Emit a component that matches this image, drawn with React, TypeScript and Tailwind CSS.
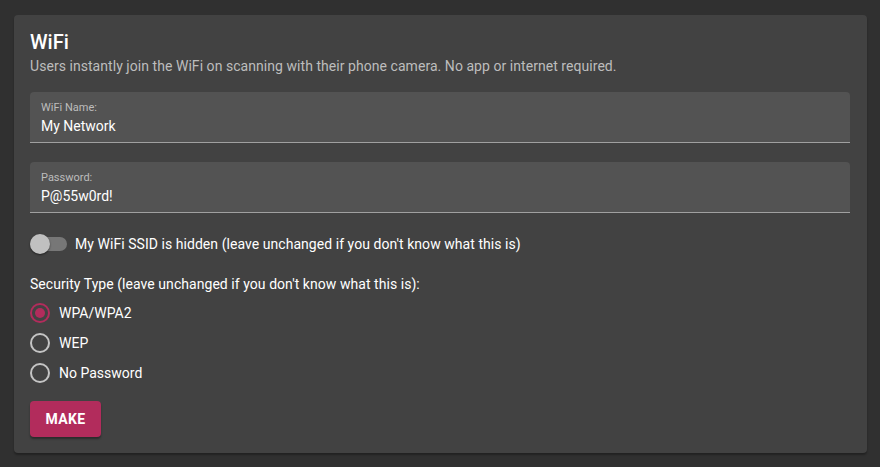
import React from "react";

export default function App() {
  return (
    <div className="w-[880px] h-[467px] bg-[#303030] pt-[15px] pl-[14px] pr-[13px]" style={{ fontFamily: "Roboto, 'Liberation Sans', sans-serif" }}>
      <div className="h-[438px] rounded-[4px] bg-[#424242] px-[16px] pt-[15px] shadow-[0_2px_2px_rgba(0,0,0,0.3)]">
        <h1 className="text-[20px] leading-[24px] font-medium text-white">WiFi</h1>
        <p className="mt-[2px] text-[14px] leading-[20px] tracking-[0.05px] text-[#bdbdbd]">
          Users instantly join the WiFi on scanning with their phone camera. No app or internet required.
        </p>
        <div className="mt-[16px] mr-[1px] h-[51px] rounded-t-[4px] bg-[#535353] border-b border-[#a0a0a0] px-[11px] pt-[9px]">
          <div className="text-[11px] leading-[13px] text-[#bdbdbd]">WiFi Name:</div>
          <div className="text-[14px] leading-[20px] text-white mt-[2px]">My Network</div>
        </div>
        <div className="mt-[19px] mr-[1px] h-[51px] rounded-t-[4px] bg-[#535353] border-b border-[#a0a0a0] px-[11px] pt-[9px]">
          <div className="text-[11px] leading-[13px] text-[#bdbdbd]">Password:</div>
          <div className="text-[14px] leading-[20px] text-white mt-[2px]">P@55w0rd!</div>
        </div>
        <div className="mt-[19px] flex items-center h-[24px]">
          <div className="relative w-[37px] h-[14px] rounded-full bg-[#777777]">
            <div className="absolute left-0 top-[-3px] w-[20px] h-[20px] rounded-full bg-[#c0c0c0] shadow-[0_1px_2px_rgba(0,0,0,0.5)]" />
          </div>
          <span className="ml-[8px] text-[14px] tracking-[0.05px] text-white">My WiFi SSID is hidden (leave unchanged if you don't know what this is)</span>
        </div>
        <div className="mt-[18px] text-[14px] leading-[20px] tracking-[0.05px] text-white">Security Type (leave unchanged if you don't know what this is):</div>
        <div className="mt-[9px] flex flex-col gap-[10px]">
          {[
            { label: "WPA/WPA2", checked: true },
            { label: "WEP", checked: false },
            { label: "No Password", checked: false },
          ].map((r) => (
            <div key={r.label} className="flex items-center h-[20px]">
              <div className={r.checked ? "w-[20px] h-[20px] rounded-full border-2 border-[#b22c5c] flex items-center justify-center" : "w-[20px] h-[20px] rounded-full border-2 border-[#c4c4c4]"}>
                {r.checked && <div className="w-[10px] h-[10px] rounded-full bg-[#b22c5c]" />}
              </div>
              <span className="ml-[9px] text-[14px] text-white">{r.label}</span>
            </div>
          ))}
        </div>
        <button className="mt-[18px] w-[71px] h-[36px] rounded-[4px] bg-[#b22c5c] text-white text-[14px] font-bold tracking-[0.4px] shadow-[0_2px_2px_rgba(0,0,0,0.35)]">
          MAKE
        </button>
      </div>
    </div>
  );
}
